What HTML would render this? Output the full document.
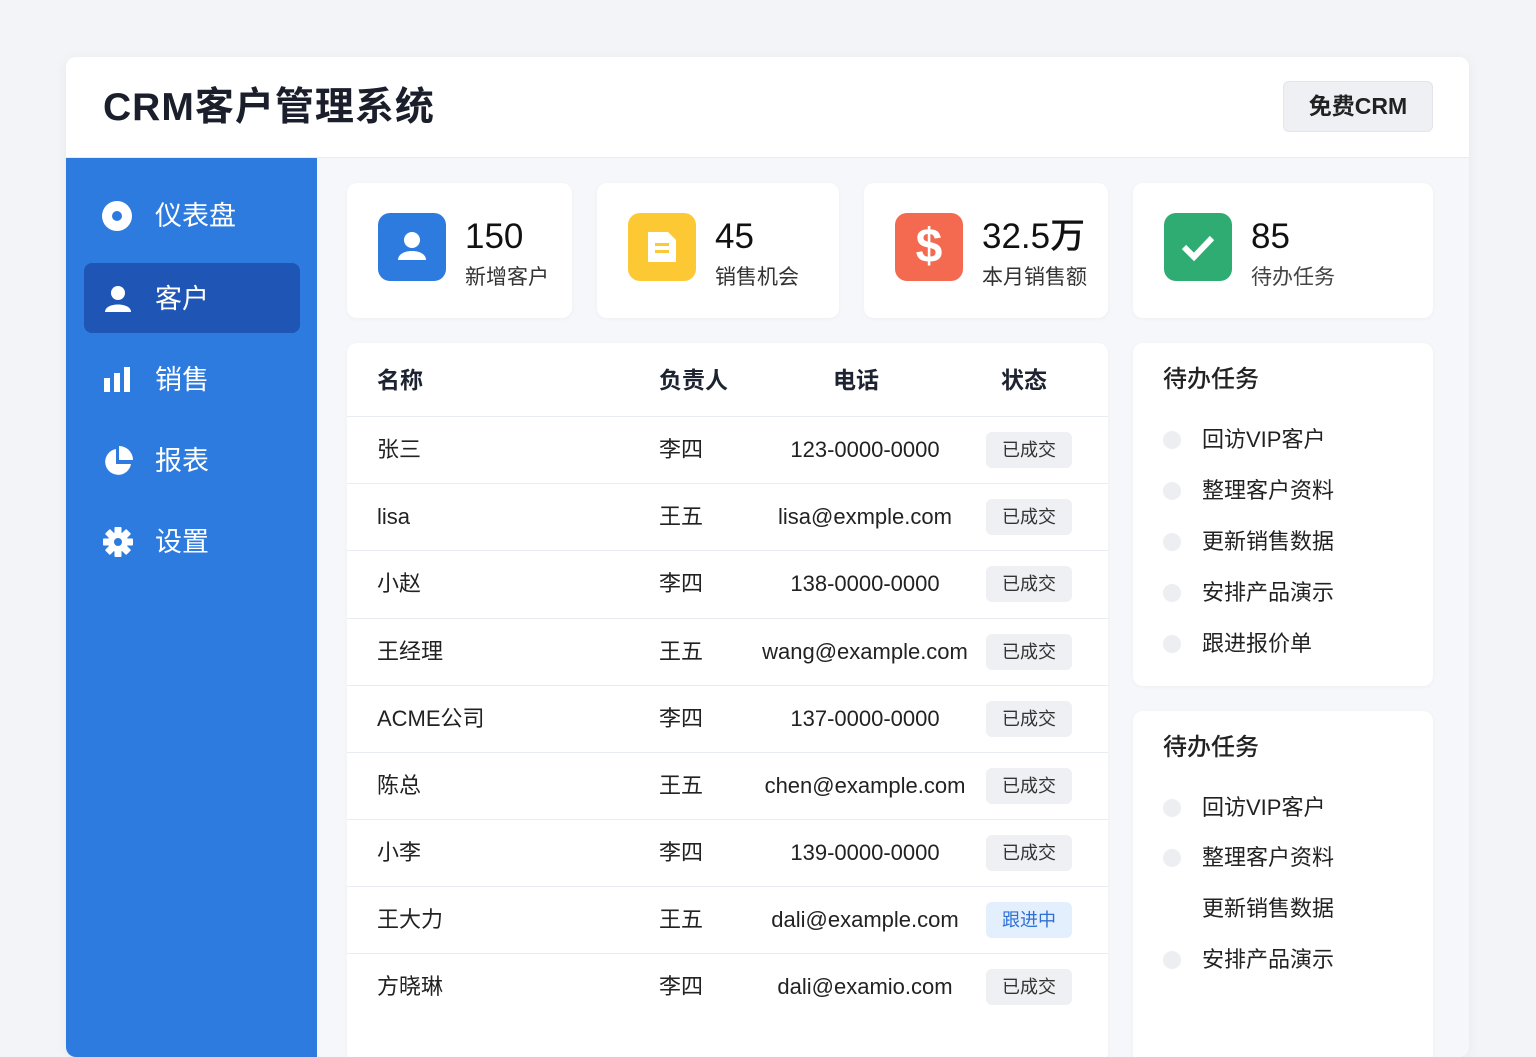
<!DOCTYPE html>
<html><head><meta charset="utf-8"><style>
*{margin:0;padding:0;box-sizing:border-box}
body{width:1536px;height:1024px;overflow:hidden;background:#f2f4f7;font-family:"Liberation Sans","Noto Sans CJK SC",sans-serif;color:#1d2330;position:relative}
.abs{position:absolute}
.main{left:66px;top:57px;width:1403px;height:1000px;background:#f5f7fa;border-radius:10px;overflow:hidden;box-shadow:0 2px 12px rgba(0,0,0,.05)}
.hdr{left:0;top:0;width:1403px;height:101px;background:#fff;border-bottom:1px solid #e8ebef}
.title{left:37px;top:26px;font-size:39px;line-height:50px;font-weight:bold;color:#1a1f2b;letter-spacing:1px}
.btn{left:1217px;top:24px;width:150px;height:51px;background:#eef0f3;border:1px solid #e2e5e9;border-radius:6px;font-size:23px;text-align:center;line-height:49px;font-weight:bold;color:#222}
.side{left:0;top:101px;width:251px;height:900px;background:#2e7be0}
.nav{left:36px;font-size:27px;color:#fff;height:40px;line-height:40px}
.nav span{position:absolute;left:53px;top:0;white-space:nowrap}
.active{left:18px;top:105px;width:216px;height:70px;background:#1f56b6;border-radius:8px}
.card{background:#fff;border-radius:10px;box-shadow:0 1px 4px rgba(0,0,0,.04)}
.ic{width:68px;height:68px;border-radius:12px;left:31px;top:30px}
.num{left:118px;top:32px;font-size:35px;line-height:44px;font-weight:500;color:#111;white-space:nowrap}
.lbl{left:118px;top:80px;font-size:21px;line-height:30px;color:#333;white-space:nowrap}
.row{position:absolute;left:0;width:761px;height:67px;border-top:1px solid #e9ecf0;font-size:22px;color:#222}
.row div{position:absolute;top:18px;line-height:30px;white-space:nowrap}
.c1{left:30px}.c2{left:312px}.c3{left:380px;width:276px;text-align:center}
.badge{left:639px!important;top:15px!important;width:86px;height:36px;line-height:36px!important;background:#eef0f3;border-radius:6px;font-size:18px;text-align:center;color:#333}
.th{font-size:23px;font-weight:bold;top:22px;line-height:30px;position:absolute}
.todo{font-size:22px;color:#222}
.todo .dot{position:absolute;left:30px;width:18px;height:18px;border-radius:50%;background:#eceef1}
.todo .t{position:absolute;left:69px;line-height:30px;white-space:nowrap}
.tt{position:absolute;left:30px;font-size:24px;line-height:30px;font-weight:500;color:#222}
</style></head><body>
<div class="abs main">
 <div class="abs hdr"></div>
 <div class="abs title">CRM客户管理系统</div>
 <div class="abs btn">免费CRM</div>
 <div class="abs side">
  <div class="abs active"></div>
  <div class="abs nav" style="top:38px"><svg class="abs" style="left:0;top:5px" width="30" height="30"><circle cx="15" cy="15" r="15" fill="#fff"/><circle cx="15" cy="15" r="5" fill="#2e7be0"/></svg><span>仪表盘</span></div>
  <div class="abs nav" style="top:121px"><svg class="abs" style="left:2px;top:5px" width="28" height="30"><circle cx="14" cy="9" r="7" fill="#fff"/><path d="M1 28 C1 18 27 18 27 28Z" fill="#fff"/></svg><span>客户</span></div>
  <div class="abs nav" style="top:202px"><svg class="abs" style="left:2px;top:7px" width="28" height="28"><rect x="0" y="11" width="6" height="14" fill="#fff"/><rect x="10" y="6" width="6" height="19" fill="#fff"/><rect x="20" y="0" width="6" height="25" fill="#fff"/></svg><span>销售</span></div>
  <div class="abs nav" style="top:283px"><svg class="abs" style="left:0;top:5px" width="32" height="32"><path d="M14 3 A13 13 0 1 0 29 18 L14 18Z" fill="#fff"/><path d="M17 0 A14 14 0 0 1 31 14 L17 14Z" fill="#fff"/></svg><span>报表</span></div>
  <div class="abs nav" style="top:364px"><svg class="abs" style="left:1px;top:5px" width="30" height="30" viewBox="0 0 30 30"><g fill="#fff" transform="translate(15 15)"><rect x="-3.5" y="-15" width="7" height="30" rx="1"/><rect x="-3.5" y="-15" width="7" height="30" rx="1" transform="rotate(45)"/><rect x="-3.5" y="-15" width="7" height="30" rx="1" transform="rotate(90)"/><rect x="-3.5" y="-15" width="7" height="30" rx="1" transform="rotate(135)"/><circle r="10"/></g><circle cx="15" cy="15" r="4" fill="#2e7be0"/></svg><span>设置</span></div>
 </div>
 <div class="abs card" style="left:281px;top:126px;width:225px;height:135px">
  <div class="abs ic" style="background:#2e7be0"><svg width="68" height="68"><circle cx="34" cy="27" r="8" fill="#fff"/><path d="M20 47 C20 35 48 35 48 47Z" fill="#fff"/></svg></div>
  <div class="abs num">150</div><div class="abs lbl">新增客户</div></div>
 <div class="abs card" style="left:531px;top:126px;width:242px;height:135px">
  <div class="abs ic" style="background:#fcc935"><svg width="68" height="68"><path d="M20 19 h20 l8 8 v22 h-28Z" fill="#fff"/><rect x="27" y="30" width="14" height="3" fill="#fcc935"/><rect x="27" y="37" width="14" height="3" fill="#fcc935"/></svg></div>
  <div class="abs num">45</div><div class="abs lbl">销售机会</div></div>
 <div class="abs card" style="left:798px;top:126px;width:244px;height:135px">
  <div class="abs ic" style="background:#f46a50"><div style="color:#fff;font-size:48px;font-weight:bold;text-align:center;line-height:68px">$</div></div>
  <div class="abs num">32.5万</div><div class="abs lbl">本月销售额</div></div>
 <div class="abs card" style="left:1067px;top:126px;width:300px;height:135px">
  <div class="abs ic" style="background:#2fac72"><svg width="68" height="68"><path d="M20 34 L30 44 L48 25" stroke="#fff" stroke-width="6" fill="none"/></svg></div>
  <div class="abs num">85</div><div class="abs lbl" style="color:#444">待办任务</div></div>
 <div class="abs card" style="left:281px;top:286px;width:761px;height:720px">
  <div class="th" style="left:30px">名称</div><div class="th" style="left:312px">负责人</div><div class="th" style="left:486px">电话</div><div class="th" style="left:654px">状态</div>
  <div class="row" style="top:73px"><div class="c1">张三</div><div class="c2">李四</div><div class="c3">123-0000-0000</div><div class="badge">已成交</div></div>
  <div class="row" style="top:140px"><div class="c1">lisa</div><div class="c2">王五</div><div class="c3">lisa@exmple.com</div><div class="badge">已成交</div></div>
  <div class="row" style="top:207px"><div class="c1">小赵</div><div class="c2">李四</div><div class="c3">138-0000-0000</div><div class="badge">已成交</div></div>
  <div class="row" style="top:275px"><div class="c1">王经理</div><div class="c2">王五</div><div class="c3">wang@example.com</div><div class="badge">已成交</div></div>
  <div class="row" style="top:342px"><div class="c1">ACME公司</div><div class="c2">李四</div><div class="c3">137-0000-0000</div><div class="badge">已成交</div></div>
  <div class="row" style="top:409px"><div class="c1">陈总</div><div class="c2">王五</div><div class="c3">chen@example.com</div><div class="badge">已成交</div></div>
  <div class="row" style="top:476px"><div class="c1">小李</div><div class="c2">李四</div><div class="c3">139-0000-0000</div><div class="badge">已成交</div></div>
  <div class="row" style="top:543px"><div class="c1">王大力</div><div class="c2">王五</div><div class="c3">dali@example.com</div><div class="badge" style="background:#e3effc;color:#2e6fd6">跟进中</div></div>
  <div class="row" style="top:610px"><div class="c1">方晓琳</div><div class="c2">李四</div><div class="c3">dali@examio.com</div><div class="badge">已成交</div></div>
 </div>
 <div class="abs card todo" style="left:1067px;top:286px;width:300px;height:343px">
  <div class="tt" style="top:22px">待办任务</div>
  <div class="dot" style="top:88px"></div><div class="t" style="top:82px">回访VIP客户</div>
  <div class="dot" style="top:139px"></div><div class="t" style="top:133px">整理客户资料</div>
  <div class="dot" style="top:190px"></div><div class="t" style="top:184px">更新销售数据</div>
  <div class="dot" style="top:241px"></div><div class="t" style="top:235px">安排产品演示</div>
  <div class="dot" style="top:292px"></div><div class="t" style="top:286px">跟进报价单</div>
 </div>
 <div class="abs card todo" style="left:1067px;top:654px;width:300px;height:360px">
  <div class="tt" style="top:22px">待办任务</div>
  <div class="dot" style="top:88px"></div><div class="t" style="top:82px">回访VIP客户</div>
  <div class="dot" style="top:138px"></div><div class="t" style="top:132px">整理客户资料</div>
  <div class="t" style="top:183px">更新销售数据</div>
  <div class="dot" style="top:240px"></div><div class="t" style="top:234px">安排产品演示</div>
 </div>
</div>
</body></html>
